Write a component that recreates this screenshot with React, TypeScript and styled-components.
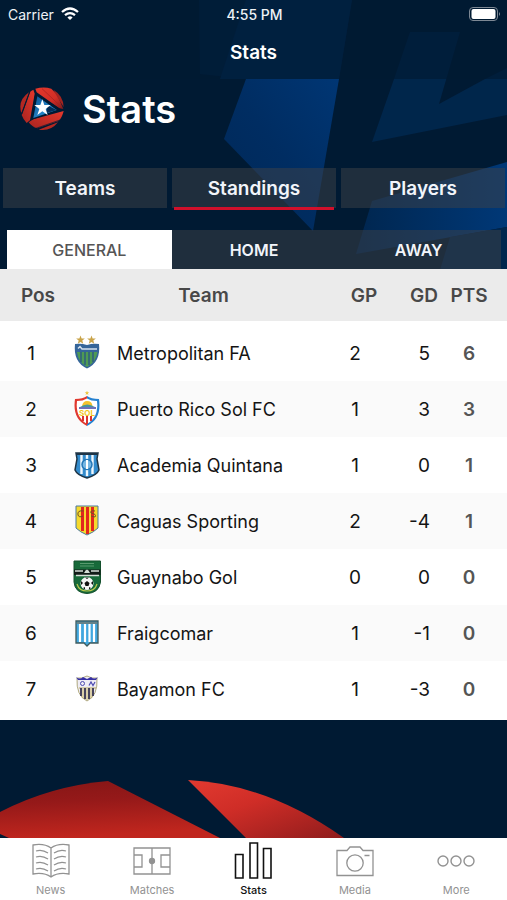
import React from "react";
import styled, { createGlobalStyle } from "styled-components";

const GlobalStyle = createGlobalStyle`
  *, *::before, *::after { box-sizing: border-box; }
  body {
    margin: 0;
    background: #001a33;
    font-family: Inter, "Liberation Sans", sans-serif;
  }
  button { font: inherit; border: 0; cursor: pointer; }
`;

const Screen = styled.div`
  position: relative;
  display: flex;
  flex-direction: column;
  min-height: 100vh;
  overflow: hidden;
  background: #001a33;
`;

const Backdrop = styled.svg`
  position: absolute;
  top: 0;
  left: 0;
  width: 100%;
  height: auto;
`;

const Header = styled.header`
  position: relative;
  background: rgba(0, 26, 51, 0.65);
  color: #fff;
`;

const StatusBar = styled.div`
  display: grid;
  grid-template-columns: 1fr auto 1fr;
  align-items: center;
  height: 28px;
  padding: 0 6px 0 8px;
  font-size: 14px;
  color: #eef2f6;
`;

const Carrier = styled.div`
  display: flex;
  align-items: center;
  gap: 7px;
`;

const Clock = styled.time`
  font-weight: 500;
`;

const Battery = styled.svg`
  justify-self: end;
`;

const NavTitle = styled.div`
  height: 51px;
  line-height: 50px;
  text-align: center;
  font-size: 19px;
  font-weight: 600;
`;

const Main = styled.main`
  position: relative;
  display: flex;
  flex: 1;
  flex-direction: column;
`;

const Brand = styled.div`
  display: flex;
  align-items: center;
  gap: 18px;
  height: 60px;
  padding-left: 20px;
`;

const BrandTitle = styled.h1`
  margin: 0;
  color: #fff;
  font-size: 38px;
  font-weight: 600;
  line-height: 48px;
`;

const Sections = styled.nav`
  display: grid;
  grid-template-columns: repeat(3, 1fr);
  gap: 5px;
  margin-top: 29px;
  padding: 0 2px 0 3px;
`;

const SectionButton = styled.button<{ $active?: boolean }>`
  position: relative;
  height: 40px;
  padding: 0;
  background: rgba(62, 65, 71, 0.5);
  color: #f2f5fa;
  font-size: 19px;
  font-weight: 600;

  &::after {
    content: "";
    display: ${(p) => (p.$active ? "block" : "none")};
    position: absolute;
    right: 2px;
    bottom: -2px;
    left: 2px;
    height: 3px;
    background: #d0102b;
  }
`;

const Filters = styled.div`
  display: grid;
  grid-template-columns: repeat(3, 1fr);
  margin: 22px 6px 0 7px;
`;

const FilterButton = styled.button<{ $active?: boolean }>`
  height: 39px;
  padding: 0;
  background: ${(p) => (p.$active ? "#fff" : "rgba(62, 65, 71, 0.5)")};
  color: ${(p) => (p.$active ? "#555" : "#f2f5fa")};
  font-size: 16px;
  font-weight: ${(p) => (p.$active ? 500 : 600)};
`;

const Table = styled.table`
  width: 100%;
  table-layout: fixed;
  border-collapse: separate;
  border-spacing: 0;
  background: #fff;
  border-bottom: 3px solid #fff;
  color: #141414;
  font-size: 19px;
`;

const Col = styled.col<{ $width?: number }>`
  width: ${(p) => (p.$width ? `${p.$width}px` : "auto")};
`;

const HeadCell = styled.th<{ $align?: string; $left?: number; $right?: number }>`
  height: 56px;
  padding: 0 ${(p) => p.$right ?? 0}px 0 ${(p) => p.$left ?? 0}px;
  border-bottom: 4px solid #fff;
  background: #ebebeb;
  color: #484848;
  text-align: ${(p) => p.$align ?? "center"};
  font-weight: 600;
`;

const Row = styled.tr`
  &:nth-child(even) { background: #fafafa; }
`;

const Cell = styled.td<{ $align?: string; $right?: number }>`
  height: 56px;
  padding: 0 ${(p) => p.$right ?? 0}px 0 0;
  text-align: ${(p) => p.$align ?? "center"};
`;

const Points = styled(Cell)`
  color: #555;
  font-weight: 600;
`;

const Team = styled.div`
  display: flex;
  align-items: center;
  gap: 16px;
  padding-left: 11px;
  font-size: 18px;
  white-space: nowrap;
`;

const Ground = styled.div`
  display: flex;
  flex: 1;
  flex-direction: column;
  justify-content: flex-end;
`;

const GroundArt = styled.svg`
  display: block;
  width: 100%;
  height: auto;
`;

const TabBar = styled.nav`
  position: relative;
  display: grid;
  grid-template-columns: repeat(5, 1fr);
  height: 62px;
  background: #fff;
`;

const Tab = styled.a<{ $active?: boolean }>`
  display: flex;
  flex-direction: column;
  align-items: center;
  gap: 1px;
  padding-top: 2px;
  color: ${(p) => (p.$active ? "#111" : "#929292")};
  font-size: 11px;
  font-weight: ${(p) => (p.$active ? 500 : 400)};
  line-height: 14px;
  text-decoration: none;
`;

const WifiIcon = () => (
  <svg width="18" height="14" viewBox="0 0 18 14" fill="none" stroke="#fff" strokeWidth="2.3">
    <path d="M1 5Q9 -2 17 5" />
    <path d="M4 8.2Q9 4 14 8.2" />
    <path d="M6.4 10.4Q9 8.2 11.6 10.4L9 13Z" fill="#fff" stroke="none" />
  </svg>
);

const Logo = () => (
  <svg width="44" height="44" viewBox="0 0 132 132" role="img" aria-label="League logo">
    <defs>
      <linearGradient id="bandTop" x1="0" y1="0" x2="1" y2="1">
        <stop offset="0" stopColor="#e4382c" />
        <stop offset=".6" stopColor="#d22e26" />
        <stop offset="1" stopColor="#7d1a1c" />
      </linearGradient>
      <linearGradient id="bandLow" x1="1" y1="0" x2="0" y2="1">
        <stop offset="0" stopColor="#e4382c" />
        <stop offset="1" stopColor="#a82420" />
      </linearGradient>
      <linearGradient id="core" x1="0" y1="0" x2="1" y2="1">
        <stop offset="0" stopColor="#0c5595" />
        <stop offset="1" stopColor="#33a3e8" />
      </linearGradient>
    </defs>
    <path d="M46 5Q72 -2 94 5L112 24L130 66L118 64L50 16Z" fill="url(#bandTop)" />
    <path d="M100 8Q130 26 131 60L114 34Z" fill="#a32420" />
    <path d="M66 5L120 56" stroke="#a32020" strokeWidth="2" />
    <path d="M40 8L44 20L30 100L20 108Q10 98 5 84L30 14Z" fill="url(#bandLow)" />
    <path d="M27 16L4 78Q-8 40 27 16Z" fill="#b32822" />
    <path d="M30 13L5 82" stroke="#001a33" strokeWidth="3" />
    <path d="M26 106L40 97L131 72Q126 92 116 102L52 124Q36 120 26 106Z" fill="url(#bandLow)" />
    <path d="M56 128L114 106Q92 134 56 128Z" fill="#b32822" />
    <path d="M48 124L120 99" stroke="#001a33" strokeWidth="2" />
    <path d="M46 18L122 67L34 99Z" fill="#001a33" />
    <path d="M52 28L110 69L40 93Z" fill="url(#core)" />
    <path d="M82 55L110 69L78 79Z" fill="#062d55" />
    <path d="M67 37L73 54L92 54L77 66L83 84L67 73L52 84L58 66L43 54L61 54Z" fill="#fff" />
  </svg>
);

const Star = ({ x, y, r, fill }: { x: number; y: number; r: number; fill: string }) => {
  const points = Array.from({ length: 10 }, (_, i) => {
    const radius = i % 2 ? r * 0.42 : r;
    const angle = (Math.PI * i) / 5 - Math.PI / 2;
    return `${x + radius * Math.cos(angle)},${y + radius * Math.sin(angle)}`;
  }).join(" ");
  return <polygon points={points} fill={fill} />;
};

const crests: Record<string, React.ReactNode> = {
  metropolitan: (
    <>
      <Star x={7.5} y={5} r={4.6} fill="#c9a349" />
      <Star x={18.5} y={5} r={4.6} fill="#c9a349" />
      <path d="M2 9Q8 8 14 10Q20 8 26 9Q28 27 14 33.500Q0 27 2 9Z" fill="#35659a" />
      <path d="M4 17H24.500Q23 27 14 32Q5 27 4 17Z" fill="#4e9a54" />
      <path d="M8 17V27M12 17V30M16 17V30M20 17V27" stroke="#2e5c80" strokeWidth="1.500" />
      <path d="M5 13.500L7 11.500L9 14H24" stroke="#d5e1ee" strokeWidth="1.500" fill="none" />
    </>
  ),
  sol: (
    <>
      <Star x={14} y={2} r={2.4} fill="#edc53d" />
      <path d="M14 5Q18 8 26 8Q29 28 14 35Z" fill="#2581d0" />
      <path d="M14 5Q10 8 2 8Q-1 28 14 35Z" fill="#e0392f" />
      <path d="M14 7.500Q18 10 24 10Q26 26 14 33Q2 26 4 10Q10 10 14 7.500Z" fill="#fff" />
      <path d="M9 15Q10 10 14 10Q19 10 19.500 15Z" fill="#f4c22d" />
      <path d="M7 16Q14 11 22 16Z" fill="#4793a0" />
      <path d="M6 17H23" stroke="#4b4ba8" strokeWidth="1.600" />
      <path d="M10 25V30M14 25V33M18 25V30" stroke="#db3430" strokeWidth="2" />
      <text x="14" y="24.500" textAnchor="middle" fontSize="8" fontWeight="700" fill="#f2c81f">SOL</text>
    </>
  ),
  quintana: (
    <>
      <path d="M3 6H25L24 12L26 23Q24 28 14 31Q4 28 2 23L4 12Z" fill="#338bcc" stroke="#1e3446" strokeWidth="1.500" />
      <path d="M8.500 8V27M14 8V29M19.500 8V27" stroke="#f0f7fc" strokeWidth="2.400" />
      <circle cx="14" cy="17.500" r="5" fill="#77b7e3" stroke="#2377b8" strokeWidth="1.500" />
      <path d="M14 13V22" stroke="#fff" strokeWidth="2" />
      <path d="M3 7H25" stroke="#1e3446" strokeWidth="2" />
    </>
  ),
  caguas: (
    <>
      <path d="M3 3H25V25Q21 29 14 32Q7 29 3 25Z" fill="#f6d92c" stroke="#4a79a0" strokeWidth="1" />
      <path d="M9.500 4V28M14.500 4V31M19.500 4V28" stroke="#e2261d" strokeWidth="3" />
      <path d="M10.500 8Q4 7 5 12Q6 15 10 13M22 8Q17 7 18 10Q24 11 22 14L18 13" fill="none" stroke="#705128" strokeWidth="1" />
      <path d="M12 15V27M17 15V27" stroke="#f4d936" strokeDasharray="3 2" />
    </>
  ),
  guaynabo: (
    <>
      <path d="M1 2H27.500V23Q26 34 14 34.500Q2 34 1 23Z" fill="#176a3a" stroke="#14502d" />
      <path d="M1 10.500H27.500V16H1Z" fill="#121c18" />
      <path d="M2 12H10M18 12H26M3 16.500H26" stroke="#d5ded7" strokeWidth="1.500" />
      <path d="M7 4.500H21M7 7H21" stroke="#599a6f" strokeWidth="1" />
      <path d="M11 14Q14 7 17 14Z" fill="#d5ded7" />
      <path d="M4 25Q6 32 14 32Q22 32 24 25" fill="none" stroke="#b9c84b" strokeWidth="1.200" />
      <circle cx="14" cy="24.500" r="6.500" fill="#f5f5f5" />
      <path d="M14 22L16.500 24L15.500 27H12.500L11.500 24Z" fill="#111" />
      <path d="M12 18.500H16L14 20ZM20 22V26L18 24ZM8 22V26L10 24ZM10 29L12 28L12 30.500ZM18 29L16 28L16 30.500Z" fill="#111" />
    </>
  ),
  fraigcomar: (
    <>
      <path d="M3 6H25V28H17L14 31L11 28H3Z" fill="#41a7df" stroke="#3f5b5d" strokeWidth="1.300" />
      <path d="M7 9V27M12 9V27M16.500 9V27M21 9V27" stroke="#fff" strokeWidth="2.200" />
      <path d="M4 8H24" stroke="#668289" strokeWidth="2" />
    </>
  ),
  bayamon: (
    <>
      <path d="M4 7Q9 8 14 5Q19 8 24 7Q25 25 14 30Q3 25 4 7Z" fill="#eeecf5" stroke="#9e955e" strokeWidth=".8" />
      <path d="M3 6Q7 9 10 6L14 8L18 6Q21 9 25 6L23 9H5Z" fill="#3730a5" />
      <circle cx="9.500" cy="12.500" r="2" fill="none" stroke="#4d4ab0" strokeWidth="1" />
      <path d="M16 14.500L18 11L20 14.500L22 11" fill="none" stroke="#4d4ab0" strokeWidth="1.200" />
      <path d="M6 17H23" stroke="#b7a65f" />
      <path d="M8 17V25M12 17V28M16 17V28M20 17V25" stroke="#46435c" strokeWidth="2" />
      <path d="M10 18V27M14 18V29M18 18V27" stroke="#c6b15d" strokeWidth="1" />
    </>
  ),
};

const Crest = ({ id }: { id: string }) => (
  <svg width="28" height="36" viewBox="0 0 28 36" aria-hidden="true">{crests[id]}</svg>
);

const TabIcon = ({ children, width = 1 }: { children: React.ReactNode; width?: number }) => (
  <svg width="40" height="42" viewBox="0 0 40 42" fill="none" stroke="currentColor" strokeWidth={width} aria-hidden="true">
    {children}
  </svg>
);

const tabs = [
  {
    label: "News",
    icon: (
      <TabIcon width={1.3}>
        <path d="M20 8Q13 3 2 5V34Q13 32 20 37Q27 32 38 34V5Q27 3 20 8V37" />
        <path d="M5 11Q11 9 17 13M5 17Q11 15 17 19M5 23Q11 21 17 25M5 29Q11 27 17 31M35 11Q29 9 23 13M35 17Q29 15 23 19M35 23Q29 21 23 25M35 29Q29 27 23 31" />
      </TabIcon>
    ),
  },
  {
    label: "Matches",
    icon: (
      <TabIcon width={1.3}>
        <path d="M2 8H38V34H2ZM20 8V34M2 15H10V27H2M38 15H29V27H38" />
        <circle cx="20" cy="21" r="2.500" fill="currentColor" />
      </TabIcon>
    ),
  },
  {
    label: "Stats",
    active: true,
    icon: (
      <TabIcon width={1.6}>
        <path d="M2.500 14.500H10V38H2.500ZM17 3H24.500V38H17ZM30.500 8.500H38V38H30.500Z" />
      </TabIcon>
    ),
  },
  {
    label: "Media",
    icon: (
      <TabIcon width={1.3}>
        <path d="M2 10.500H12L15 7H25L28 10.500H38V35.500H2ZM29.500 15.500H34.500" />
        <circle cx="20" cy="23" r="8.200" />
      </TabIcon>
    ),
  },
  {
    label: "More",
    icon: (
      <TabIcon width={1.4}>
        <circle cx="7" cy="21" r="5" />
        <circle cx="20" cy="21" r="5" />
        <circle cx="33" cy="21" r="5" />
      </TabIcon>
    ),
  },
];

const standings = [
  { crest: "metropolitan", name: "Metropolitan FA", gp: 2, gd: 5, pts: 6 },
  { crest: "sol", name: "Puerto Rico Sol FC", gp: 1, gd: 3, pts: 3 },
  { crest: "quintana", name: "Academia Quintana", gp: 1, gd: 0, pts: 1 },
  { crest: "caguas", name: "Caguas Sporting", gp: 2, gd: -4, pts: 1 },
  { crest: "guaynabo", name: "Guaynabo Gol", gp: 0, gd: 0, pts: 0 },
  { crest: "fraigcomar", name: "Fraigcomar", gp: 1, gd: -1, pts: 0 },
  { crest: "bayamon", name: "Bayamon FC", gp: 1, gd: -3, pts: 0 },
];

export default function App() {
  return (
    <>
      <GlobalStyle />
      <Screen>
        <Backdrop viewBox="0 0 507 270" aria-hidden="true">
          <defs>
            <linearGradient id="beam" x1="0" y1="1" x2="1" y2="0">
              <stop offset="0" stopColor="#002856" />
              <stop offset=".5" stopColor="#002d62" />
              <stop offset="1" stopColor="#003674" />
            </linearGradient>
            <linearGradient id="wing" x1="0" y1="0" x2="1" y2="0">
              <stop offset="0" stopColor="#00264f" />
              <stop offset="1" stopColor="#003877" />
            </linearGradient>
          </defs>
          <path d="M199 0H352L339 79H246L200 74Z" fill="#002344" />
          <path d="M246 0H352L339 79H220Z" fill="#002b57" />
          <path d="M246 79H339L313 231L224 139Z" fill="url(#beam)" />
          <path d="M410 32H460L439 104L485 79L507 68V115L372 142L394 79Z" fill="#00264b" />
          <path d="M507 162L372 201L356 254L507 227Z" fill="url(#wing)" />
          <path d="M507 227L450 237L440 270H507Z" fill="#00264d" />
        </Backdrop>

        <Header>
          <StatusBar>
            <Carrier>
              Carrier
              <WifiIcon />
            </Carrier>
            <Clock>4:55 PM</Clock>
            <Battery width="32" height="14" viewBox="0 0 32 14" aria-label="Battery full">
              <rect x=".5" y=".5" width="28" height="13" rx="3.500" fill="none" stroke="#7d8894" />
              <rect x="2.500" y="2" width="24" height="10" rx="2" fill="#fff" />
              <path d="M30 5Q32 7 30 9Z" fill="#7d8894" />
            </Battery>
          </StatusBar>
          <NavTitle>Stats</NavTitle>
        </Header>

        <Main>
          <Brand>
            <Logo />
            <BrandTitle>Stats</BrandTitle>
          </Brand>

          <Sections aria-label="Statistics">
            <SectionButton type="button">Teams</SectionButton>
            <SectionButton type="button" $active aria-current="page">Standings</SectionButton>
            <SectionButton type="button">Players</SectionButton>
          </Sections>

          <Filters>
            <FilterButton type="button" $active aria-pressed="true">GENERAL</FilterButton>
            <FilterButton type="button" aria-pressed="false">HOME</FilterButton>
            <FilterButton type="button" aria-pressed="false">AWAY</FilterButton>
          </Filters>

          <Table>
            <colgroup>
              <Col $width={62} />
              <Col />
              <Col $width={62} />
              <Col $width={48} />
              <Col $width={64} />
            </colgroup>
            <thead>
              <tr>
                <HeadCell scope="col" $left={14}>Pos</HeadCell>
                <HeadCell scope="col" $left={12}>Team</HeadCell>
                <HeadCell scope="col">GP</HeadCell>
                <HeadCell scope="col" $align="right" $right={5}>GD</HeadCell>
                <HeadCell scope="col" $right={12}>PTS</HeadCell>
              </tr>
            </thead>
            <tbody>
              {standings.map((team, i) => (
                <Row key={team.crest}>
                  <Cell>{i + 1}</Cell>
                  <Cell $align="left">
                    <Team>
                      <Crest id={team.crest} />
                      {team.name}
                    </Team>
                  </Cell>
                  <Cell $right={18}>{team.gp}</Cell>
                  <Cell $align="right" $right={13}>{team.gd}</Cell>
                  <Points $right={12}>{team.pts}</Points>
                </Row>
              ))}
            </tbody>
          </Table>

          <Ground>
            <GroundArt viewBox="0 0 507 62" aria-hidden="true">
              <defs>
                <linearGradient id="hill" x1="0" y1="0" x2=".2" y2="1">
                  <stop offset="0" stopColor="#851616" />
                  <stop offset=".4" stopColor="#951919" />
                  <stop offset="1" stopColor="#c0261e" />
                </linearGradient>
                <linearGradient id="slope" x1="0" y1="0" x2="1" y2="1">
                  <stop offset="0" stopColor="#e23a30" />
                  <stop offset=".4" stopColor="#cf2d27" />
                  <stop offset="1" stopColor="#8f1c1c" />
                </linearGradient>
              </defs>
              <path d="M0 36Q50 10 108 5L220 62H9L0 58Z" fill="url(#hill)" />
              <path d="M188 4Q268 8 344 62H246Z" fill="url(#slope)" />
            </GroundArt>
          </Ground>
        </Main>

        <TabBar aria-label="Main">
          {tabs.map((tab) => (
            <Tab key={tab.label} href={`#${tab.label.toLowerCase()}`} $active={tab.active} aria-current={tab.active ? "page" : undefined}>
              {tab.icon}
              {tab.label}
            </Tab>
          ))}
        </TabBar>
      </Screen>
    </>
  );
}
